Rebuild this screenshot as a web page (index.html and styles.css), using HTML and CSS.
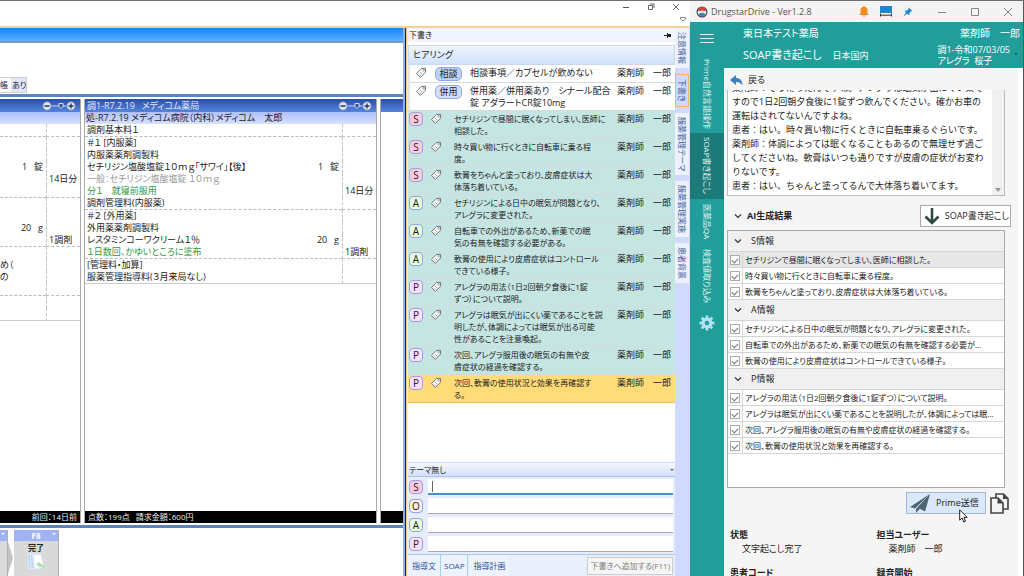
FILE: index.html
```html
<!DOCTYPE html>
<html lang="ja">
<head>
    <meta charset="UTF-8">
    <meta name="viewport" content="width=device-width, initial-scale=1.0">
    <title>DrugstarDrive</title>
    <link rel="stylesheet" href="styles.css">
</head>
<body>
    <svg class="defs" width="0" height="0">
        <symbol id="tag" viewBox="0 0 12 12">
            <path d="M6.2 1.6 10.4 1.2 10.6 5 5.4 10.4 1.4 6.6Z" fill="#fff" stroke="#777" stroke-linejoin="round"/>
            <path d="M3.6 6.4 6 8.6M5 5 7.4 7.2" stroke="#999" stroke-width=".8"/>
            <circle cx="8.6" cy="3.2" r=".9" fill="none" stroke="#777" stroke-width=".7"/>
        </symbol>
        <symbol id="zoom" viewBox="0 0 34 10">
            <path d="M9 5h16" stroke="#9fb6e8" stroke-width="1.4"/>
            <circle cx="5" cy="5" r="4.2" fill="#dfe6f5" stroke="#6c83b8" stroke-width=".8"/>
            <circle cx="29" cy="5" r="4.2" fill="#dfe6f5" stroke="#6c83b8" stroke-width=".8"/>
            <path d="M2.5 5h5M26.5 5h5M29 2.5v5" stroke="#26385f" stroke-width="1.4"/>
            <path d="M17 2.5h4v3l-2 2-2-2z" fill="#3b5292" stroke="#e6ecfa" stroke-width=".9"/>
        </symbol>
        <symbol id="chevron" viewBox="0 0 8 8">
            <path d="M1 2.5 4 5.5 7 2.5" fill="none" stroke="#333" stroke-width="1.2"/>
        </symbol>
    </svg>

    <div class="prime">
        <div class="prime-title">
            <button aria-label="最小化"><svg width="8" height="8"><path d="M1 4.5h6" stroke="#555"/></svg></button>
            <button aria-label="元に戻す"><svg width="8" height="8"><path d="M1.5 2.5h4v4h-4zM3 1h4v4" fill="none" stroke="#555" stroke-width=".9"/></svg></button>
            <button aria-label="閉じる"><svg width="8" height="8"><path d="M1 1l6 6M7 1l-6 6" stroke="#555" stroke-width=".9"/></svg></button>
            <svg class="title-drop" width="6" height="5"><path d="M.5.5h5v1.500l-2.500 2-2.500-2z" fill="none" stroke="#666" stroke-width=".8"/></svg>
        </div>
        <div class="prime-body">
            <main class="chart">
                <div class="blue-band"></div>
                <div class="patient-area"><div class="notebook"><span>帳</span><b>あり</b></div></div>
                <div class="records">
                    <section class="record previous">
                        <header><svg width="34" height="10"><use href="#zoom"/></svg></header>
                        <div class="hospital"></div>
                        <table>
                            <tbody><tr><td></td><td></td></tr></tbody>
                            <tbody>
                                <tr><td></td><td></td></tr>
                                <tr><td></td><td></td></tr>
                                <tr><td class="amount">1&ensp; 錠</td><td></td></tr>
                                <tr><td></td><td>14日分</td></tr>
                                <tr><td></td><td></td></tr>
                            </tbody>
                            <tbody>
                                <tr><td></td><td></td></tr>
                                <tr><td></td><td></td></tr>
                                <tr><td class="amount">20&ensp; g</td><td></td></tr>
                                <tr><td></td><td>1調剤</td></tr>
                            </tbody>
                            <tbody>
                                <tr><td></td><td></td></tr>
                                <tr><td class="cut">め（</td><td></td></tr>
                                <tr><td class="cut">の</td><td></td></tr>
                                <tr><td></td><td></td></tr>
                            </tbody>
                            <tbody class="last">
                                <tr><td></td><td></td></tr>
                                <tr><td></td><td></td></tr>
                            </tbody>
                        </table>
                        <footer class="right">前回：14日前</footer>
                    </section>
                    <section class="record current">
                        <header><span>調1-R7.2.19&ensp; メディコム薬局</span><svg width="34" height="10"><use href="#zoom"/></svg></header>
                        <div class="hospital">処-R7.2.19 メディコム病院（内科）メディコム　太郎</div>
                        <table>
                            <tbody>
                                <tr><td>調剤基本料１</td><td></td><td></td></tr>
                            </tbody>
                            <tbody>
                                <tr><td>＃１ [内服薬]</td><td></td><td></td></tr>
                                <tr><td>内服薬薬剤調製料</td><td></td><td></td></tr>
                                <tr><td>セチリジン塩酸塩錠１０ｍｇ「サワイ」【後】</td><td class="amount">1&ensp; 錠</td><td></td></tr>
                                <tr><td class="generic">一般：セチリジン塩酸塩錠 １０ｍｇ</td><td></td><td></td></tr>
                                <tr><td class="usage">分１　就寝前服用</td><td></td><td>14日分</td></tr>
                                <tr><td>調剤管理料(内服薬)</td><td></td><td></td></tr>
                            </tbody>
                            <tbody>
                                <tr><td>＃２ [外用薬]</td><td></td><td></td></tr>
                                <tr><td>外用薬薬剤調製料</td><td></td><td></td></tr>
                                <tr><td>レスタミンコーワクリーム１％</td><td class="amount">20&ensp; g</td><td></td></tr>
                                <tr><td class="usage">１日数回、かゆいところに塗布</td><td></td><td>1調剤</td></tr>
                            </tbody>
                            <tbody class="last">
                                <tr><td>[管理料・加算]</td><td></td><td></td></tr>
                                <tr><td>服薬管理指導料(３月来局なし)</td><td></td><td></td></tr>
                            </tbody>
                        </table>
                        <footer>点数：199点&ensp; 請求金額：600円</footer>
                    </section>
                    <section class="record next">
                        <header></header>
                        <footer></footer>
                    </section>
                </div>
                <div class="function-keys">
                    <div class="key key-cut"><div class="key-head"><i></i></div></div>
                    <svg class="key-arrow" width="6" height="45"><path d="M0 12 5 28 0 44z" fill="#c4c4c4"/></svg>
                    <button class="key">
                        <span class="key-head">F8<i></i></span>
                        <span class="key-label">完了</span>
                        <svg width="20" height="19"><path d="M1 1l8-1 1 17-8 1z" fill="#dbe7fb"/><path d="M7 3l8-1 3 14-9 1z" fill="#fff" stroke="#d6dde8" stroke-width=".6"/><path d="M3 3l1 13M5.500 3l1 13" stroke="#b9cff3"/><path d="M10 12l3-2 1 1 5 3v2l-6-1z" fill="#a9e5b8"/></svg>
                    </button>
                </div>
            </main>

            <section class="draft">
                <header class="draft-title">下書き<svg width="8" height="7"><path d="M0 3.500h3M3.500 1v5" stroke="#222"/><path d="M4 2h3v3H4z" fill="#222"/></svg></header>
                <div class="draft-list">
                    <h2>ヒアリング</h2>
                    <ul class="hearing">
                        <li><svg width="12" height="12"><use href="#tag"/></svg><b class="kind active">相談</b><p>相談事項／カプセルが飲めない</p><span>薬剤師　一郎</span></li>
                        <li><svg width="12" height="12"><use href="#tag"/></svg><b class="kind">併用</b><p>併用薬／併用薬あり　シナール配合<br>錠 アダラートCR錠10mg</p><span>薬剤師　一郎</span></li>
                    </ul>
                    <ul class="soap">
                        <li><b class="mark s">S</b><svg width="12" height="12"><use href="#tag"/></svg><p>セチリジンで昼間に眠くなってしまい、医師に<br>相談した。</p><span>薬剤師　一郎</span></li>
                        <li><b class="mark s">S</b><svg width="12" height="12"><use href="#tag"/></svg><p>時々買い物に行くときに自転車に乗る程<br>度。</p><span>薬剤師　一郎</span></li>
                        <li><b class="mark s">S</b><svg width="12" height="12"><use href="#tag"/></svg><p>軟膏をちゃんと塗っており、皮膚症状は大<br>体落ち着いている。</p><span>薬剤師　一郎</span></li>
                        <li><b class="mark a">A</b><svg width="12" height="12"><use href="#tag"/></svg><p>セチリジンによる日中の眠気が問題となり、<br>アレグラに変更された。</p><span>薬剤師　一郎</span></li>
                        <li><b class="mark a">A</b><svg width="12" height="12"><use href="#tag"/></svg><p>自転車での外出があるため、新薬での眠<br>気の有無を確認する必要がある。</p><span>薬剤師　一郎</span></li>
                        <li><b class="mark a">A</b><svg width="12" height="12"><use href="#tag"/></svg><p>軟膏の使用により皮膚症状はコントロール<br>できている様子。</p><span>薬剤師　一郎</span></li>
                        <li><b class="mark p">P</b><svg width="12" height="12"><use href="#tag"/></svg><p>アレグラの用法（1日2回朝夕食後に1錠<br>ずつ）について説明。</p><span>薬剤師　一郎</span></li>
                        <li><b class="mark p">P</b><svg width="12" height="12"><use href="#tag"/></svg><p>アレグラは眠気が出にくい薬であることを説<br>明したが、体調によっては眠気が出る可能<br>性があることを注意喚起。</p><span>薬剤師　一郎</span></li>
                        <li><b class="mark p">P</b><svg width="12" height="12"><use href="#tag"/></svg><p>次回、アレグラ服用後の眠気の有無や皮<br>膚症状の経過を確認する。</p><span>薬剤師　一郎</span></li>
                        <li class="selected"><b class="mark p">P</b><svg width="12" height="12"><use href="#tag"/></svg><p>次回、軟膏の使用状況と効果を再確認す<br>る。</p><span>薬剤師　一郎</span></li>
                    </ul>
                </div>
                <button class="theme">テーマ無し<i></i></button>
                <form class="entry">
                    <label for="inS" class="mark s">S</label><div class="field focus"><input type="text" id="inS"><i></i></div>
                    <label for="inO" class="mark o">O</label><div class="field"><input type="text" id="inO"></div>
                    <label for="inA" class="mark a">A</label><div class="field"><input type="text" id="inA"></div>
                    <label for="inP" class="mark p">P</label><div class="field"><input type="text" id="inP"></div>
                </form>
                <div class="draft-tabs">
                    <button>指導文</button>
                    <button class="on">SOAP</button>
                    <button>指導計画</button>
                    <button class="add" disabled>下書きへ追加する(F11)</button>
                </div>
            </section>

            <nav class="side-tabs">
                <button>注意情報</button>
                <button class="on">下書き</button>
                <button>服薬管理テーマ</button>
                <button>服薬管理実施</button>
                <button>患者背景</button>
            </nav>
        </div>
    </div>

    <div class="drive">
        <header class="drive-title">
            <svg width="12" height="12"><circle cx="6" cy="6" r="5.500" fill="#34495e"/><circle cx="6" cy="6" r="4.300" fill="#e8eef2"/><path d="M2 5a4 4 0 0 1 8 0z" fill="#d6453d"/><path d="M3 9a3 2.500 0 0 1 6 0L6 10.500z" fill="#3977b8"/><circle cx="6" cy="5.800" r="1.600" fill="#f4d7bd"/></svg>
            <span>DrugstarDrive - Ver1.2.8</span>
            <svg width="10" height="11"><path d="M5 0a1 1 0 0 1 1 1c2 .5 2.500 2 2.500 4v2.500L10 9H0l1.500-1.500V5C1.500 3 2 1.500 4 1a1 1 0 0 1 1-1zM3.500 9.500h3L5 11z" fill="#f58a1f"/></svg>
            <svg width="12" height="11"><path d="M0 0h12v7H0z" fill="#1f86d2"/><path d="M.5 7.500v3M11.500 7.500v3M1 9.200h10" stroke="#333" fill="none"/></svg>
            <svg width="10" height="10"><path d="M5.500.5 9.500 4 8 4.300 6.500 6l-.3 2.200L4.300 6.800.5 9.500 3 5.500 1.500 3.800 4 3.500 5.600 2z" fill="#1f86d2"/></svg>
            <button aria-label="最小化"><svg width="8" height="8"><path d="M0 4.500h8" stroke="#888"/></svg></button>
            <button aria-label="最大化"><svg width="8" height="8"><path d="M.5.5h7v7h-7z" fill="none" stroke="#888"/></svg></button>
            <button aria-label="閉じる"><svg width="8" height="8"><path d="M0 0l8 8M8 0l-8 8" stroke="#888"/></svg></button>
        </header>
        <div class="drive-main">
            <nav class="rail">
                <button class="menu" aria-label="メニュー"><svg width="14" height="9"><path d="M0 .5h14M0 4.500h14M0 8.500h14" stroke="#d5f0ee"/></svg></button>
                <button>Prime自然言語操作</button>
                <button class="on">SOAP書き起こし</button>
                <button class="qa">医薬品QA</button>
                <button class="lab">検査値取り込み</button>
                <button class="gear" aria-label="設定"><svg width="16" height="16" viewBox="0 0 16 16"><g fill="#b5e0f5"><circle cx="8" cy="8" r="5.200"/><path id="tooth" d="M6.800.5h2.400l.6 4H6.200zM6.200 11.500h3.600l-.6 4H6.800z"/><use href="#tooth" transform="rotate(45 8 8)"/><use href="#tooth" transform="rotate(90 8 8)"/><use href="#tooth" transform="rotate(135 8 8)"/></g><circle cx="8" cy="8" r="2.300" fill="#229e9a"/></svg></button>
            </nav>
            <div class="drive-right">
                <header class="drive-head">
                    <div class="store">
                        <div class="name">東日本テスト薬局</div>
                        <div>SOAP書き起こし<small>日本国内</small></div>
                    </div>
                    <div class="user">
                        <div class="name">薬剤師　一郎</div>
                        <button class="patient">調1-令和07/03/05<br>アレグラ&ensp;桜子<i></i></button>
                    </div>
                </header>
                <div class="content">
                    <a href="#" class="back"><svg width="13" height="11"><path d="M6 0v3c4 0 6.500 2.500 6.500 7.500C11 8 9 7 6 7v3L0 5z" fill="#3f7fc4"/></svg>戻る</a>
                    <div class="transcript">
                        <textarea id="log" readonly aria-label="書き起こし">薬剤師：そうだったんですね。アレグラは眠気が出にくい薬ですので1日2回朝夕食後に1錠ずつ飲んでください。確かお車の運転はされてないんですよね。
患者：はい。時々買い物に行くときに自転車乗るぐらいです。
薬剤師：体調によっては眠くなることもあるので無理せず過ごしてくださいね。軟膏はいつも通りですが皮膚の症状がお変わりないです。
患者：はい、ちゃんと塗ってるんで大体落ち着いてます。</textarea>
                        <div class="scroll"><i></i></div>
                    </div>
                    <div class="result-head">
                        <svg width="8" height="8"><use href="#chevron"/></svg><h3>AI生成結果</h3>
                        <button><svg width="16" height="17"><path d="M8 0v14M1.500 8.500 8 15l6.500-6.500" fill="none" stroke="#2e4a41" stroke-width="2.600"/></svg>SOAP書き起こし</button>
                    </div>
                    <div class="results">
                        <h4><svg width="8" height="8"><use href="#chevron"/></svg>S情報</h4>
                        <label class="hover"><input type="checkbox" checked><span>セチリジンで昼間に眠くなってしまい、医師に相談した。</span></label>
                        <label><input type="checkbox" checked><span>時々買い物に行くときに自転車に乗る程度。</span></label>
                        <label><input type="checkbox" checked><span>軟膏をちゃんと塗っており、皮膚症状は大体落ち着いている。</span></label>
                        <h4><svg width="8" height="8"><use href="#chevron"/></svg>A情報</h4>
                        <label><input type="checkbox" checked><span>セチリジンによる日中の眠気が問題となり、アレグラに変更された。</span></label>
                        <label><input type="checkbox" checked><span>自転車での外出があるため、新薬での眠気の有無を確認する必要が…</span></label>
                        <label><input type="checkbox" checked><span>軟膏の使用により皮膚症状はコントロールできている様子。</span></label>
                        <h4><svg width="8" height="8"><use href="#chevron"/></svg>P情報</h4>
                        <label><input type="checkbox" checked><span>アレグラの用法（1日2回朝夕食後に1錠ずつ）について説明。</span></label>
                        <label><input type="checkbox" checked><span>アレグラは眠気が出にくい薬であることを説明したが、体調によっては眠…</span></label>
                        <label><input type="checkbox" checked><span>次回、アレグラ服用後の眠気の有無や皮膚症状の経過を確認する。</span></label>
                        <label><input type="checkbox" checked><span>次回、軟膏の使用状況と効果を再確認する。</span></label>
                    </div>
                    <div class="actions">
                        <button class="send"><svg width="20" height="19"><path d="M20 0 0 13l5 1.500zM20 0 6 15v4l3-3.200zM20 0 8.500 14l6.500 3.500z" fill="#4c6475"/></svg>Prime送信</button>
                        <button class="copy" aria-label="コピー"><svg width="19" height="21"><path d="M6 5V1h7.500L18 5.500V16h-5" fill="none" stroke="#444" stroke-width="1.600"/><path d="M13 1v5h5z" fill="#444"/><path d="M1 5h7l5 5v10H1z" fill="#f5f5f5" stroke="#444" stroke-width="1.600"/><path d="M7.500 5v5.500H13z" fill="#444"/></svg></button>
                        <svg class="cursor" width="9" height="14"><path d="M.7.8v10.400l2.400-2.200 1.700 4 1.700-.8L4.900 8.400h3.300z" fill="#fff" stroke="#222"/></svg>
                    </div>
                    <dl class="info">
                        <div><dt>状態</dt><dd>文字起こし完了</dd></div>
                        <div><dt>担当ユーザー</dt><dd>薬剤師　一郎</dd></div>
                        <div><dt>患者コード</dt><dd></dd></div>
                        <div><dt>録音開始</dt><dd></dd></div>
                    </dl>
                </div>
            </div>
        </div>
    </div>
    <script>
        const log = document.getElementById("log");
        log.scrollTop = log.scrollHeight;
    </script>
</body>
</html>
```
FILE: styles.css
```css
* {
    margin: 0;
    padding: 0;
    box-sizing: border-box;
}

body {
    display: flex;
    height: 100vh;
    overflow: hidden;
    background: #fff;
    border-top: 1px solid #6f6f6f;
    font-family: "Open Sans", "Noto Sans CJK JP", sans-serif;
    font-size: 9px;
    line-height: 12px;
    font-feature-settings: "palt";
    color: #222;
    white-space: nowrap;
}

button, input, textarea {
    font: inherit;
    font-feature-settings: inherit;
    color: inherit;
    border: none;
    background: none;
    white-space: nowrap;
}

ul {
    list-style: none;
}

svg {
    display: block;
    flex: none;
}

.defs {
    position: absolute;
}

/* left window */
.prime {
    flex: 1;
    min-width: 0;
    display: flex;
    flex-direction: column;
}

.prime-title {
    height: 25px;
    position: relative;
    display: flex;
    justify-content: flex-end;
    gap: 17px;
    padding: 2px 10px 0 0;
}

.prime-title button {
    height: 8px;
}

.title-drop {
    position: absolute;
    right: 4px;
    bottom: 4px;
}

.prime-body {
    flex: 1;
    min-height: 0;
    display: flex;
    border-top: 2px solid #fbd193;
}

.chart {
    flex: 1;
    min-width: 0;
    display: flex;
    flex-direction: column;
    border-right: 2px solid #8fb2e3;
}

.blue-band {
    height: 15px;
    background: linear-gradient(#1585f5, #58b2ff);
    border-bottom: 2px solid #7d9cc4;
}

.patient-area {
    height: 51px;
    display: flex;
    align-items: flex-end;
    padding-bottom: 1px;
}

.notebook {
    display: flex;
    width: 27px;
    height: 16px;
    line-height: 14px;
    font-size: 8px;
    border: 1px solid #ccc;
    border-left: none;
    background: #fafafa;
    overflow: hidden;
}

.notebook b {
    flex: 1;
    margin-left: 3px;
    padding-left: 1px;
    font-weight: 400;
    background: #e1e8fb;
}

.records {
    flex: 1;
    min-height: 0;
    display: flex;
    gap: 3px;
    padding: 2px 0;
    border-top: 3px solid #5a84c0;
    border-bottom: 3px solid #5a84c0;
}

.record {
    display: flex;
    flex-direction: column;
    border-left: 1px solid #aaa;
    border-right: 1px solid #aaa;
}

.previous {
    width: 81px;
    border-left: none;
}

.current {
    flex: 1;
    min-width: 0;
}

.next {
    width: 23px;
    border-right: none;
}

.record header {
    height: 13px;
    display: flex;
    align-items: center;
    justify-content: space-between;
    padding: 0 4px 0 2px;
    color: #e4ebfb;
    background: linear-gradient(#2a4fa5, #5584dd);
}

.previous header {
    justify-content: flex-end;
}

.hospital {
    height: 12px;
    padding-left: 1px;
    background: linear-gradient(#aebffc, #d9e1ff);
}

.record table {
    width: 100%;
    table-layout: fixed;
    border-spacing: 0;
}

.record td {
    height: 12px;
    padding-left: 2px;
}

.record td:last-child {
    width: 34px;
    border-left: 1px dashed #c4c4c4;
}

.record tr:last-child td {
    height: 13px;
    border-bottom: 1px dashed #bbb;
}

.record .last tr:last-child td {
    border-bottom: 1px solid #ccc;
}

.record td.amount {
    width: 56px;
    padding-right: 3px;
    text-align: right;
}

.record td.cut {
    padding-left: 0;
}

.current td:nth-child(2) {
    width: 56px;
}

.generic {
    color: #999;
}

.usage {
    color: #2f9a3d;
}

.record footer {
    height: 12px;
    margin-top: auto;
    padding: 0 3px;
    font-size: 8px;
    color: #eee;
    background: #000;
}

.right {
    text-align: right;
}

.function-keys {
    height: 48px;
    display: flex;
    padding-top: 2px;
}

.key {
    width: 45px;
    display: flex;
    flex-direction: column;
    align-items: center;
    background: #d9d9d9;
    border-right: 1px solid #b0b0b0;
}

.key-cut {
    width: 8px;
}

.key-head {
    align-self: stretch;
    height: 11px;
    line-height: 11px;
    font-size: 8px;
    font-weight: 700;
    color: #fff;
    text-align: center;
    background: #9fb2f3;
    position: relative;
}

.key-head i {
    position: absolute;
    right: 2px;
    top: 3px;
    border: 2px solid transparent;
    border-top-color: #fff;
}

.key-label {
    margin-top: 2px;
    height: 9px;
    line-height: 10px;
    font-weight: 700;
    font-size: 8px;
}

/* draft panel */
.draft {
    width: 270px;
    display: flex;
    flex-direction: column;
    border-left: 1px solid #222;
    box-shadow: inset 1px 0 #f5c98b;
    padding-left: 2px;
    background: #e6ecfa;
}

.draft-title {
    height: 14px;
    display: flex;
    align-items: center;
    justify-content: space-between;
    padding: 0 3px 0 1px;
    font-size: 8px;
    background: #f1f5ff;
}

.draft-list {
    flex: 1;
    min-height: 0;
    padding: 3px 0 0;
    background: #fff;
}

.draft-list h2 {
    height: 20px;
    line-height: 18px;
    padding-left: 4px;
    font-size: 9px;
    font-weight: 400;
    background: linear-gradient(#eef5ff, #cfe1fb);
    border: 1px solid #c9d8ef;
}

.draft-list li {
    display: flex;
    align-items: flex-start;
    padding: 2px 4px 1px 1px;
    border-bottom: 1px solid #d5dcdc;
}

.draft-list p {
    flex: 1;
    min-width: 0;
}

.hearing {
    border-left: 2px solid #e3e3e3;
}

.draft-list .hearing li {
    min-height: 17px;
    padding-left: 5px;
}

.kind {
    flex: none;
    width: 27px;
    height: 14px;
    line-height: 12px;
    margin: 0 8px;
    text-align: center;
    font-weight: 400;
    border: 1px solid #8fa9e6;
    border-radius: 5px;
    background: #d3dffc;
}

.kind.active {
    background: #bcd3f3;
}

.soap li {
    background: #c5e5e3;
}

.soap p {
    font-size: 8px;
}

.mark {
    flex: none;
    width: 14px;
    height: 14px;
    line-height: 12px;
    font-size: 10px;
    font-weight: 400;
    text-align: center;
    border: 1px solid #94a2e6;
    border-radius: 4px;
}

.soap .mark {
    margin: -1px 7px 0 0;
}

.soap svg {
    margin-right: 12px;
}

.s {
    background: #ffc9dc;
}

.o {
    background: #ffeee2;
}

.a {
    background: #e7fddb;
}

.p {
    background: #fbdffc;
}

.soap li.selected {
    background: #ffdc77;
    border-color: #f0b95a;
}

.theme {
    height: 15px;
    display: flex;
    align-items: center;
    justify-content: space-between;
    padding: 0 1px;
    font-size: 8px;
    background: linear-gradient(#f3f7ff, #d3e0f9);
    border-top: 1px solid #d0dafc;
    border-bottom: 1px solid #a9c3ec;
}

.theme i {
    border: 2px solid transparent;
    border-top-color: #666;
    border-bottom: none;
}

.entry {
    display: grid;
    grid-template-columns: 14px 1fr;
    gap: 3px 5px;
    padding: 2px 2px 2px 1px;
}

.entry .mark {
    margin-top: 1px;
}

.field {
    display: flex;
    align-items: center;
    height: 16px;
    position: relative;
    background: #fff;
    border-bottom: 1px solid #aaa;
}

.field input {
    width: 100%;
    padding-left: 6px;
    outline: none;
}

.field.focus {
    border-bottom: 2px solid #4490d0;
}

.field i {
    position: absolute;
    left: 4px;
    width: 1px;
    height: 11px;
    background: #666;
}

.draft-tabs {
    height: 22px;
    display: flex;
    align-items: stretch;
    font-size: 8px;
    color: #2b5199;
    border-top: 1px solid #a8c9ee;
    background: #e8effb;
}

.draft-tabs button {
    padding: 0 4px;
    background: #edf3fe;
}

.draft-tabs .on {
    padding: 0 3px;
    border-left: 1px solid #a6d0ee;
    border-right: 1px solid #a6d0ee;
    margin-right: 1px;
}

.draft-tabs .add {
    margin: 2px 2px 1px auto;
    padding: 0 2px;
    color: #808080;
    background: #f5f5f5;
    border: 1px solid #ccc;
}

.side-tabs {
    width: 15px;
    display: flex;
    flex-direction: column;
    align-items: flex-start;
    gap: 6px;
    padding-right: 1px;
    font-size: 8px;
    background: #d0dafc;
}

.side-tabs button {
    writing-mode: vertical-rl;
    text-orientation: sideways;
    width: 14px;
    line-height: 12px;
    padding: 4px 0;
    color: #3c5796;
    background: #edf2ff;
}

.side-tabs .on {
    background: #d0dafc;
    border: 1px solid #f1b56a;
}

/* right window */
.drive {
    width: 334px;
    display: flex;
    flex-direction: column;
    border-right: 1px solid #555;
    background: #229e9a;
}

.drive-title {
    height: 21px;
    display: flex;
    align-items: center;
    padding: 0 11px 0 6px;
    color: #555;
    background: #f3f3f3;
}

.drive-title span {
    flex: 1;
    padding-left: 3px;
}

.drive-title > svg + svg {
    margin-left: 11px;
}

.drive-title button {
    margin-left: 25px;
}

.drive-main {
    flex: 1;
    min-height: 0;
    display: flex;
}

.rail {
    width: 34px;
    display: flex;
    flex-direction: column;
    align-items: center;
    font-size: 8px;
    color: #e0f5f3;
}

.rail button {
    writing-mode: vertical-rl;
    text-orientation: sideways;
    width: 34px;
    display: flex;
    flex-direction: row;
    align-items: center;
    justify-content: center;
    height: 79px;
}

.rail .menu, .rail .gear {
    height: 32px;
}

.rail .on {
    height: 66px;
    background: #1c7a79;
}

.rail .qa {
    height: 46px;
}

.rail .lab {
    height: 62px;
}

.drive-right {
    flex: 1;
    min-width: 0;
    display: flex;
    flex-direction: column;
}

.drive-head {
    height: 46px;
    display: flex;
    justify-content: space-between;
    padding: 0 3px 0 19px;
    font-size: 11px;
    line-height: 22px;
    color: #fff;
}

.drive-head .name {
    font-size: 10px;
}

.store small {
    margin-left: 11px;
    font-size: 9px;
}

.patient {
    position: relative;
    display: block;
    line-height: 11px;
    font-size: 9px;
    text-align: left;
    padding-right: 10px;
}

.user {
    display: flex;
    flex-direction: column;
    align-items: flex-end;
}

.patient i {
    position: absolute;
    right: 2px;
    top: 9px;
    border: 2px solid transparent;
    border-top-color: #0d5d5b;
}

.content {
    flex: 1;
    min-height: 0;
    overflow: hidden;
    padding: 0 13px 0 3px;
    background: #f5f5f5;
    border-right: 5px solid #fff;
}

.back {
    height: 22px;
    display: flex;
    align-items: center;
    gap: 5px;
    padding: 2px 0 0 3px;
    color: #222;
    text-decoration: none;
}

.transcript {
    display: flex;
    height: 106px;
    border: 1px solid #bbb;
    border-top: none;
    background: #fff;
}

.transcript textarea {
    flex: 1;
    padding: 0 5px 2px 4px;
    line-height: 14px;
    font-feature-settings: normal;
    white-space: pre-wrap;
    resize: none;
    overflow: hidden;
}

.scroll {
    width: 12px;
    display: flex;
    align-items: flex-end;
    justify-content: center;
    padding-bottom: 3px;
    background: #f0f0f0;
}

.scroll i {
    border: 3px solid transparent;
    border-top: 4px solid #999;
    border-bottom: none;
}

.result-head {
    display: flex;
    align-items: center;
    height: 22px;
    margin: 9px -6px 3px 0;
    padding-left: 7px;
}

.result-head h3 {
    flex: 1;
    padding-left: 5px;
    font-size: 9px;
}

.result-head button {
    display: flex;
    align-items: center;
    gap: 5px;
    height: 22px;
    padding: 0 1px 0 3px;
    background: #fff;
    border: 1px solid #aaa;
}

.results {
    height: 258px;
    border: 1px solid #aaa;
    background: #fff;
}

.results h4 {
    display: flex;
    align-items: center;
    gap: 9px;
    height: 21px;
    padding-left: 6px;
    font-size: 9px;
    font-weight: 400;
    background: #f0f0f0;
    border-bottom: 1px solid #d6d6d6;
}

.results label {
    display: flex;
    align-items: center;
    height: 16px;
    border-bottom: 1px solid #d6d6d6;
}

.results .hover {
    background: #e7e7e7;
}

.results input {
    appearance: none;
    flex: none;
    width: 10px;
    height: 10px;
    margin: 0 2px;
    border: 1px solid #aaa;
    background: #fff;
}

.results input:checked::before {
    content: "";
    display: block;
    width: 5px;
    height: 3px;
    margin: 2px 1px;
    border: solid #777;
    border-width: 0 0 1px 1px;
    transform: rotate(-45deg);
}

.results span {
    flex: 1;
    height: 15px;
    line-height: 15px;
    padding-left: 2px;
    font-size: 8px;
    border-left: 1px solid #d6d6d6;
}

.actions {
    display: flex;
    justify-content: flex-end;
    align-items: center;
    gap: 4px;
    margin: 4px -4px 0 0;
    position: relative;
}

.send {
    display: flex;
    align-items: center;
    gap: 6px;
    height: 22px;
    width: 80px;
    padding-left: 3px;
    background: #dae8fa;
    border: 1px solid #9fb8d8;
}

.cursor {
    position: absolute;
    right: 41px;
    top: 17px;
}

.info {
    display: grid;
    grid-template-columns: 1fr 1fr;
    row-gap: 10px;
    padding: 14px 0 0 3px;
    margin-right: -18px;
    line-height: 14px;
}

.info dt {
    font-weight: 700;
}

.info dd {
    padding-left: 12px;
}
```
